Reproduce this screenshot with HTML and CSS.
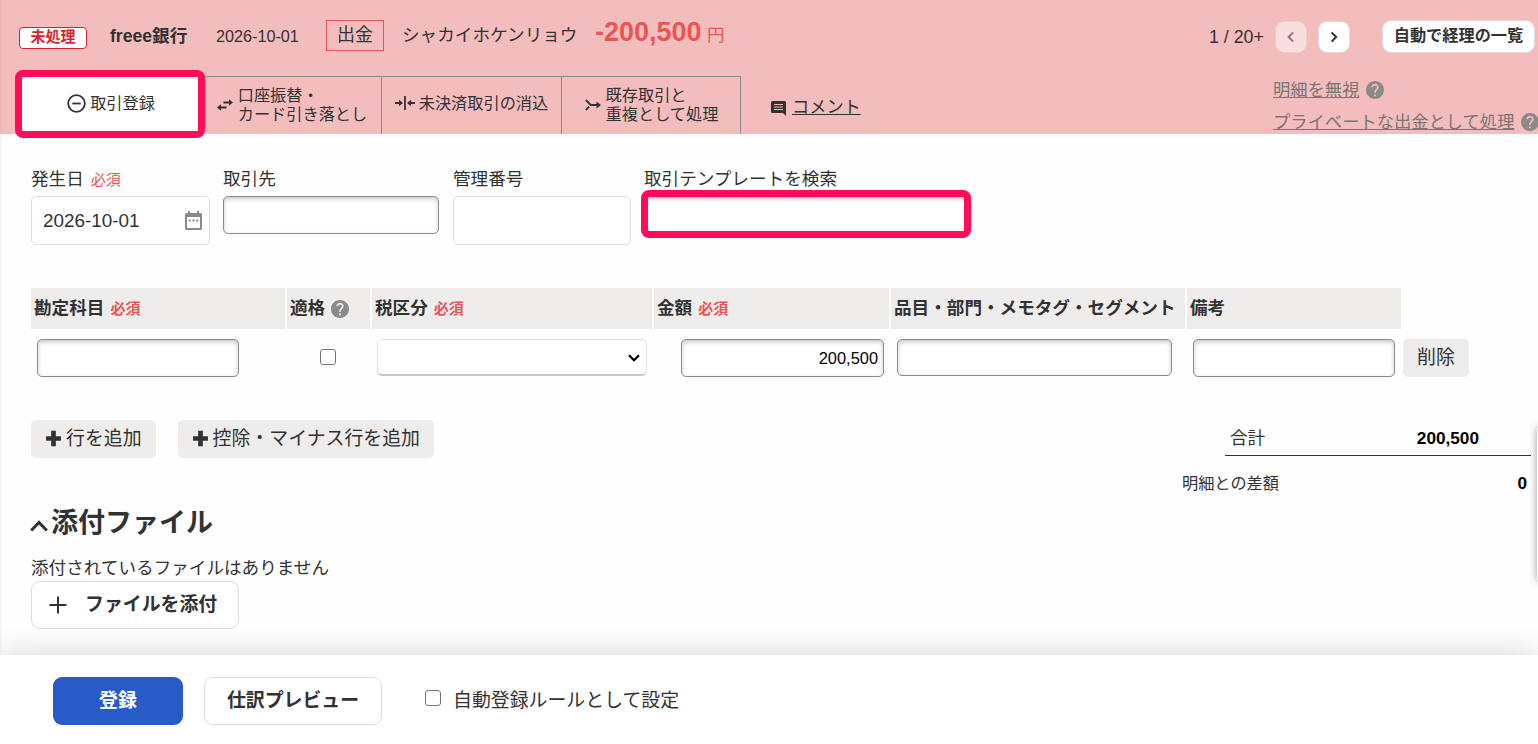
FILE: index.html
```
<!DOCTYPE html>
<html lang="ja">
<head>
	<meta charset="UTF-8">
	<title>自動で経理</title>
	<meta name="viewport" content="width=device-width">
	<link rel="stylesheet" href="styles.css">
</head>
<body>
	<svg class="defs">
		<symbol id="help" viewBox="2 2 20 20">
			<path d="M12 2C6.48 2 2 6.48 2 12s4.48 10 10 10 10-4.48 10-10S17.52 2 12 2zm1 17h-2v-2h2v2zm2.07-7.75l-.9.92C13.45 12.9 13 13.5 13 15h-2v-.5c0-1.1.45-2.1 1.17-2.83l1.24-1.26c.37-.36.59-.86.59-1.41 0-1.1-.9-2-2-2s-2 .9-2 2H8c0-2.21 1.79-4 4-4s4 1.79 4 4c0 .88-.36 1.68-.93 2.25z"/>
		</symbol>
		<symbol id="plus" viewBox="0 0 16 16">
			<path d="M5.8 .8h4.4v5H15v4.4h-4.8v5H5.8v-5H1V5.800h4.800z"/>
		</symbol>
	</svg>

	<header class="header">
		<div class="summary">
			<span class="status">未処理</span>
			<strong class="bank">freee銀行</strong>
			<span class="date">2026-10-01</span>
			<span class="kind">出金</span>
			<span class="name">シャカイホケンリョウ</span>
			<span class="price">-200,500</span>
			<span class="yen">円</span>
			<div class="pager">
				<span class="count">1 / 20+</span>
				<button class="page" disabled><svg width="8" height="10" viewBox="0 0 8 10"><path d="M6.2 .4L1.6 5l4.600 4.600"/></svg></button>
				<button class="page"><svg width="8" height="10" viewBox="0 0 8 10"><path d="M1.600 .4L6.200 5 1.600 9.600"/></svg></button>
				<button class="list">自動で経理の一覧</button>
			</div>
		</div>
		<div class="menu">
			<ul class="tabs">
				<li class="tab active">
					<svg class="stroke" width="19" height="19" viewBox="0 0 19 19"><circle cx="9.5" cy="9.5" r="8.300"/><path d="M5.300 9.500h8.400"/></svg>
					<span>取引登録</span>
				</li>
				<li class="tab double">
					<svg width="16" height="12" viewBox="0 0 16 12"><path class="line" d="M6.500 3.500H13M3 8.500h6.500"/><path d="M12 .3l4 3.200-4 3.200zM4 5.300L0 8.500l4 3.200z"/></svg>
					<span>口座振替・<br>カード引き落とし</span>
				</li>
				<li class="tab">
					<svg width="20" height="16" viewBox="0 0 20 16"><path class="line" d="M10 1v14M0 8h5M15 8h5"/><path d="M4 4.800L8 8l-4 3.200zM16 4.800L12 8l4 3.200z"/></svg>
					<span>未決済取引の消込</span>
				</li>
				<li class="tab double">
					<svg width="16" height="12" viewBox="0 0 16 12"><path class="line" d="M.8 1l5 5H13M.8 11l3.400-3.400"/><path d="M11.500 2.500L16 6l-4.500 3.500z"/></svg>
					<span>既存取引と<br>重複として処理</span>
				</li>
			</ul>
			<a class="comment">
				<svg width="15" height="15" viewBox="0 0 15 15"><path d="M1.500 0h12A1.500 1.500 0 0 1 15 1.500V15l-3-3H1.500A1.500 1.500 0 0 1 0 10.500v-9A1.500 1.500 0 0 1 1.500 0z"/><path class="rows" d="M3 3.500h9M3 6h9M3 8.500h9"/></svg>
				<span>コメント</span>
			</a>
			<div class="links">
				<div><a>明細を無視</a><svg class="help"><use href="#help"/></svg></div>
				<div><a>プライベートな出金として処理</a><svg class="help"><use href="#help"/></svg></div>
			</div>
		</div>
		<div class="mark mark-tab"></div>
	</header>

	<main class="main">
		<div class="fields">
			<div class="field field-date">
				<label>発生日 <small>必須</small></label>
				<div class="box">
					<span>2026-10-01</span>
					<svg width="17" height="19" viewBox="0 0 17 19"><path d="M3 0h2v2h7V0h2v2h1.500A1.500 1.500 0 0 1 17 3.500v14a1.500 1.500 0 0 1-1.500 1.500h-14A1.500 1.500 0 0 1 0 17.500v-14A1.500 1.500 0 0 1 1.500 2H3zM2 6v11h13V6z" fill-rule="evenodd"/><path d="M3.800 8.500h2v2h-2zM7.500 8.500h2v2h-2zM11.200 8.500h2v2h-2z"/></svg>
				</div>
			</div>
			<div class="field field-partner">
				<label>取引先</label>
				<input type="text">
			</div>
			<div class="field field-number">
				<label>管理番号</label>
				<div class="box"></div>
			</div>
			<div class="field field-template">
				<label>取引テンプレートを検索</label>
				<input type="text">
				<div class="mark mark-template"></div>
			</div>
		</div>

		<div class="grid grid-head">
			<div>勘定科目 <small>必須</small></div>
			<div>適格 <svg class="help"><use href="#help"/></svg></div>
			<div>税区分 <small>必須</small></div>
			<div>金額 <small>必須</small></div>
			<div>品目・部門・メモタグ・セグメント</div>
			<div>備考</div>
		</div>
		<div class="grid grid-row">
			<div><input type="text" class="account"></div>
			<div class="center"><input type="checkbox"></div>
			<div class="tax"><span class="select"><svg width="12" height="8" viewBox="0 0 12 8"><path d="M1 1.200l5 5 5-5"/></svg></span></div>
			<div class="right"><input type="text" class="amount" value="200,500"></div>
			<div><input type="text" class="item"></div>
			<div><input type="text" class="note"></div>
			<button class="gray delete">削除</button>
		</div>

		<div class="bottom">
			<div class="buttons">
				<button class="gray"><svg class="plus"><use href="#plus"/></svg>行を追加</button>
				<button class="gray"><svg class="plus"><use href="#plus"/></svg>控除・マイナス行を追加</button>
			</div>
			<div class="totals">
				<div class="total"><span>合計</span><b>200,500</b></div>
				<div class="diff"><span>明細との差額</span><b>0</b></div>
			</div>
		</div>

		<section class="files">
			<h2><svg width="18" height="12" viewBox="0 0 18 12"><path d="M1.200 10.500L9 2.500l7.800 8"/></svg>添付ファイル</h2>
			<p>添付されているファイルはありません</p>
			<button class="white attach"><svg width="18" height="18" viewBox="0 0 18 18"><path d="M9 .5v17M.5 9h17"/></svg>ファイルを添付</button>
		</section>
	</main>

	<footer class="footer">
		<button class="submit">登録</button>
		<button class="white preview">仕訳プレビュー</button>
		<label><input type="checkbox"><span>自動登録ルールとして設定</span></label>
	</footer>
	<div class="side"></div>
</body>
</html>
```
FILE: styles.css
```
* {
	list-style: none;
	padding: 0;
	margin: 0;
	box-sizing: border-box;
}

body {
	width: 1538px;
	height: 744px;
	position: relative;
	overflow: hidden;
	display: flex;
	flex-direction: column;
	background: #fefefe;
	box-shadow: inset 3px 0 3px -2px rgba(0, 0, 0, .06);
	color: #323232;
	font: 17.6px/26px "Liberation Sans", "Noto Sans CJK JP", sans-serif;
}

button,
input {
	font: inherit;
	color: inherit;
	border: none;
}

svg {
	flex: none;
	fill: currentColor;
}

.defs {
	position: absolute;
	width: 0;
	height: 0;
}

.header {
	position: relative;
	flex: none;
	height: 134px;
	padding-top: 15px;
	background: #f4bdbd;
	white-space: nowrap;
	box-shadow: inset 3px 0 3px -2px rgba(0, 0, 0, .06);
}

.summary {
	display: flex;
	align-items: center;
	height: 41px;
	padding-left: 19px;
}

.status {
	width: 68px;
	height: 22px;
	margin: 4px 23px 0 0;
	border: 1px solid #dc1e32;
	border-radius: 4px;
	background: #fff;
	color: #dc1e32;
	font-size: 15px;
	font-weight: bold;
	line-height: 18px;
	text-align: center;
}

.bank {
	width: 106px;
}

.date {
	width: 110px;
	font-size: 16.2px;
}

.kind {
	width: 58px;
	height: 31px;
	margin-right: 18px;
	border: 1px solid #e95555;
	font-size: 18px;
	line-height: 28px;
	text-align: center;
}

.name {
	width: 193px;
	margin-top: -2px;
}

.price {
	width: 112px;
	margin-top: -8px;
	color: #e95555;
	font-size: 27px;
	font-weight: bold;
}

.yen {
	color: #e95555;
	margin-top: -2px;
}

.pager {
	display: flex;
	align-items: center;
	margin: 2px 3px 0 auto;
}

.count {
	width: 66px;
	font-size: 17.8px;
}

.page {
	display: flex;
	align-items: center;
	justify-content: center;
	width: 32px;
	height: 32px;
	margin-right: 11px;
	border: 1px solid #e1dcdc;
	border-radius: 9px;
	background: #fff;
}

.page svg {
	fill: none;
	stroke: currentColor;
	stroke-width: 2;
}

.page:disabled {
	opacity: .5;
}

.list {
	width: 153px;
	height: 33px;
	margin-left: 21px;
	border: 1px solid #e1dcdc;
	border-radius: 9px;
	background: #fff;
	font-size: 16.2px;
	font-weight: bold;
	line-height: 26px;
	padding-bottom: 4px;
}

.menu {
	display: flex;
	margin-top: 20px;
	padding-left: 22px;
}

.tabs {
	display: flex;
}

.tab {
	display: flex;
	align-items: center;
	justify-content: center;
	gap: 5px;
	width: 180px;
	height: 58px;
	padding-bottom: 5px;
	border: solid #8c8989;
	border-width: 1px 1px 0 0;
	font-size: 16.2px;
	line-height: 19px;
}

.tab:last-child {
	width: 179px;
}

.tab.active {
	background: #fff;
	padding-right: 1px;
}

.tab.double {
	gap: 6px;
	padding: 0 0 2px 1px;
}

.tab svg {
	margin-right: -1px;
}

.tab .line,
.tab .stroke {
	fill: none;
	stroke: currentColor;
	stroke-width: 1.8;
}

.comment {
	display: flex;
	align-items: center;
	gap: 6px;
	margin-left: 30px;
	padding-bottom: 1px;
	font-size: 17.2px;
	text-decoration: underline;
}

.comment svg {
	margin-top: 3px;
}

.rows {
	stroke: #f4bdbd;
	stroke-width: 1;
}

.links {
	margin-left: auto;
	width: 265px;
	color: #787575;
	font-size: 17.3px;
	line-height: 32px;
	text-decoration: underline;
	margin-top: -2px;
}

.links div {
	display: flex;
	align-items: center;
}

.help {
	width: 18px;
	height: 18px;
	color: #8c8989;
}

.links .help {
	margin-left: 7px;
}

.mark {
	position: absolute;
	border: 7px solid #ff0d59;
	border-radius: 8px;
	z-index: 1;
}

.mark-tab {
	left: 15px;
	top: 70px;
	width: 190px;
	height: 68px;
}

.main {
	flex: 1;
	padding: 31px 7px 0 31px;
}

.fields {
	display: flex;
	height: 123px;
}

.field {
	position: relative;
	display: flex;
	flex-direction: column;
	gap: 5px;
}

.field label {
	height: 26px;
	padding-top: 1px;
}

.field-date {
	width: 179px;
	margin-right: 13px;
}

.field-partner {
	width: 216px;
	margin-right: 14px;
}

.field-number {
	width: 178px;
	margin-right: 13px;
}

.field-template {
	width: 324px;
}

small {
	color: #e95555;
	font-size: 15px;
	margin-left: 2px;
}

.box {
	display: flex;
	align-items: center;
	justify-content: space-between;
	height: 49px;
	padding: 0 7px 0 11px;
	border: 1px solid #e1dcd6;
	border-radius: 5px;
	background: #fff;
	font-size: 18.9px;
}

.box svg {
	color: #8c8989;
}

input[type="text"] {
	display: block;
	height: 38px;
	padding: 0 6px;
	border: 1px solid #8c8989;
	border-radius: 5px;
	background: #fff;
	box-shadow: inset 0 2px 4px rgba(0, 0, 0, .22);
}

input[type="checkbox"] {
	appearance: none;
	width: 16px;
	height: 16px;
	border: 1.5px solid #767676;
	border-radius: 3px;
	background: #fff;
}

.mark-template {
	left: -3px;
	top: 25px;
	width: 330px;
	height: 48px;
}

.grid {
	display: grid;
	grid-template-columns: 254px 83px 280px 235px 294px 214px 66px;
	column-gap: 2px;
}

.grid-head div {
	display: flex;
	align-items: center;
	height: 41px;
	padding: 0 0 2px 3px;
	background: #efedeb;
	font-weight: bold;
	white-space: nowrap;
}

.grid-head .help {
	margin: 2px 0 0 6px;
}

.grid-head small {
	margin: 2px 0 0 6px;
}

.grid-row {
	padding-top: 10px;
}

.grid-row > div {
	padding-left: 6px;
}

.grid-row .center {
	display: flex;
	padding: 10px 0 0 33px;
}

.grid-row .tax {
	padding-left: 5px;
}

.grid-row .right {
	padding-left: 27px;
}

.account {
	width: 202px;
}

.select {
	display: flex;
	align-items: center;
	justify-content: flex-end;
	width: 270px;
	height: 37px;
	padding: 2px 6px 0 0;
	border: 1px solid #e1e1e1;
	border-bottom: 2px solid #c6c6c6;
	border-radius: 5px;
	background: #fff;
}

.select svg {
	fill: none;
	stroke: #000;
	stroke-width: 2.2;
}

.amount {
	width: 203px;
	color: #000;
	font-size: 16.4px;
	text-align: right;
}

input.amount {
	padding-right: 5px;
}

input.item {
	width: 275px;
	height: 37px;
}

.note {
	width: 202px;
}

.gray {
	height: 38px;
	border-radius: 5px;
	background: #efedeb;
	font-size: 18.9px;
}

.bottom {
	display: flex;
	justify-content: space-between;
	margin-top: 43px;
}

.buttons {
	display: flex;
	gap: 22px;
}

.buttons .gray {
	display: flex;
	align-items: center;
	gap: 4px;
	height: 38px;
	padding: 0 14px;
}

.plus {
	width: 17px;
	height: 17px;
	margin-top: -2px;
}

.totals {
	width: 349px;
}

.total {
	display: flex;
	height: 36px;
	margin-left: 43px;
	padding: 5px 52px 0 5px;
	border-bottom: 1px solid #323232;
	justify-content: space-between;
}

.totals b {
	color: #000;
	font-size: 17.2px;
}

.diff {
	display: flex;
	justify-content: space-between;
	padding: 14px 4px 0 0;
	font-size: 16.2px;
}

.files h2 {
	display: flex;
	align-items: center;
	margin-top: 7px;
	gap: 2px;
	font-size: 27px;
	line-height: 40px;
}

.files h2 svg {
	margin: 6px 1px 0 -1px;
	fill: none;
	stroke: currentColor;
	stroke-width: 3;
}

.files p {
	margin-top: 12px;
}

.white {
	height: 48px;
	border: 1px solid #dcdcdc;
	border-radius: 9px;
	background: #fff;
	font-size: 18.9px;
	font-weight: bold;
}

.attach {
	display: flex;
	align-items: center;
	width: 208px;
	padding-left: 17px;
	gap: 18px;
}

.attach svg {
	stroke: currentColor;
	stroke-width: 2;
}

.footer {
	flex: none;
	display: flex;
	height: 89px;
	padding: 22px 0 0 53px;
	background: #fff;
	box-shadow: 0 0 32px rgba(0, 0, 0, .16);
}

.submit {
	width: 130px;
	height: 48px;
	margin-right: 21px;
	border-radius: 9px;
	background: #285ac8;
	color: #fff;
	font-size: 18.9px;
	font-weight: bold;
}

.preview {
	width: 178px;
	margin-right: 43px;
}

.footer label {
	display: flex;
	align-items: center;
	gap: 12px;
	height: 42px;
	font-size: 18.9px;
}

.footer label span {
	padding-top: 5px;
}

/* drawer peeking in from the right edge */
.side {
	position: absolute;
	left: 1537px;
	top: 428px;
	width: 20px;
	height: 152px;
	background: #fff;
	box-shadow: 0 0 8px rgba(0, 0, 0, .4);
}
```
